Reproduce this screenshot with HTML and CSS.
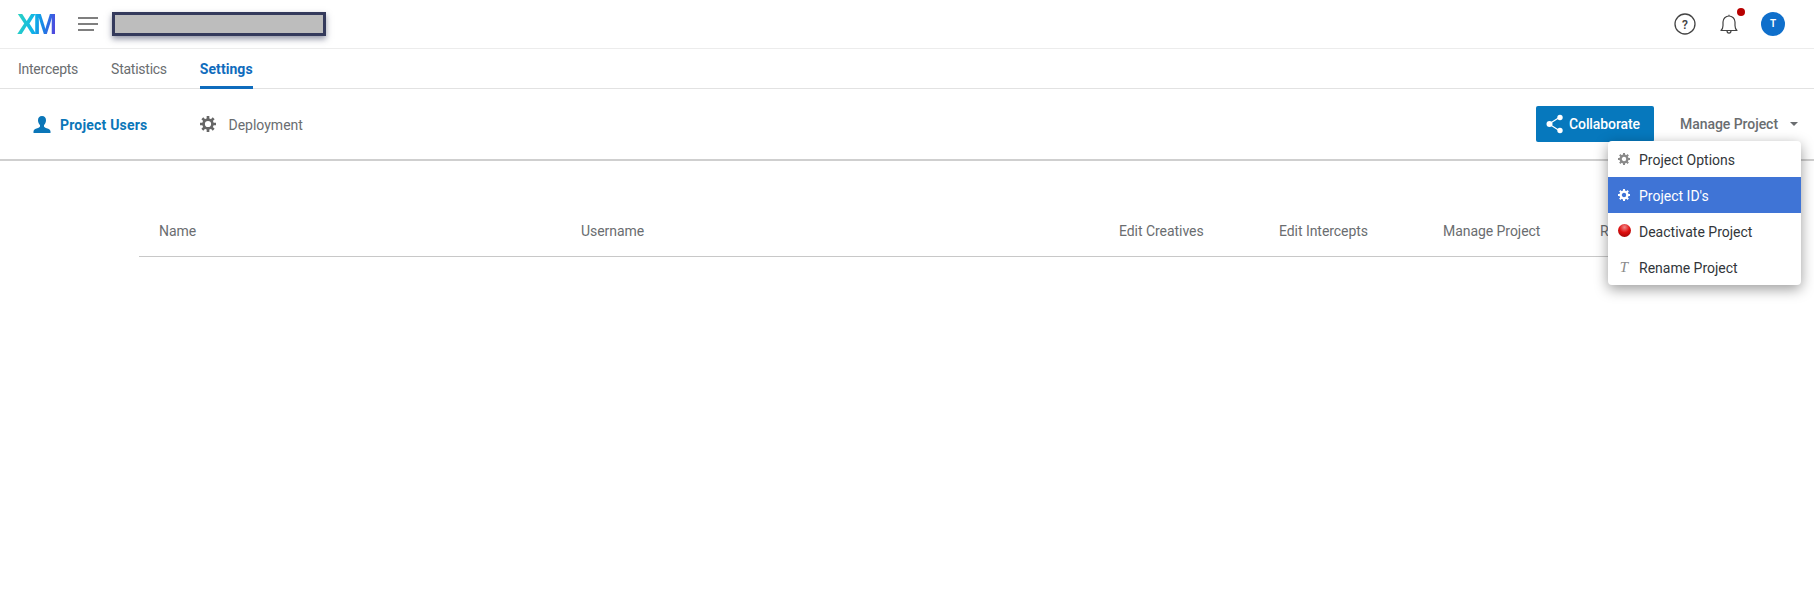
FILE: index.html
```html
<!DOCTYPE html>
<html lang="en">
<head>
<meta charset="utf-8">
<title>Project Settings</title>
<link rel="stylesheet" href="styles.css">
</head>
<body>
<header class="topbar">
  <div class="logo">XM</div>
  <svg class="burger" width="20" height="14" viewBox="0 0 20 14"><path d="M0 1h20M0 7h20M0 13h16" stroke="#555" stroke-width="1.6" fill="none"/></svg>
  <div class="redacted"></div>
  <div class="topbar-right">
    <svg class="help" width="22" height="22" viewBox="0 0 22 22"><circle cx="11" cy="11" r="10" fill="none" stroke="#444" stroke-width="1.3"/><text x="11" y="15.500" text-anchor="middle" class="help-mark">?</text></svg>
    <div class="bell-wrap">
      <svg width="18" height="20" viewBox="0 0 18 20"><path d="M1 16.500c1.500-1.200 2-2.500 2-5V8a6 6 0 0 1 12 0v3.500c0 2.500.5 3.800 2 5zM7 16.500c0 3.500 4 3.500 4 0M9 2V.8" fill="none" stroke="#444" stroke-width="1.200" stroke-linejoin="round"/></svg>
      <span class="dot"></span>
    </div>
    <div class="avatar">T</div>
  </div>
</header>
<nav class="tabs">
  <a class="tab">Intercepts</a>
  <a class="tab">Statistics</a>
  <a class="tab active">Settings</a>
</nav>
<section class="subnav">
  <a class="sub active">
    <svg width="18" height="17" viewBox="0 0 18 17"><path d="M9 0c2.600 0 4 1.900 4 4.300 0 2-.9 3.800-2 4.800v1.400c0 .9 2.200 1.400 4.200 2.200 1.500.6 2.300 1.500 2.300 2.800V17H.5v-1.500c0-1.300.8-2.200 2.300-2.800 2-.8 4.200-1.300 4.200-2.200V9.100C5.900 8.100 5 6.300 5 4.300 5 1.900 6.400 0 9 0z" fill="#0b76b8"/></svg>
    <span class="sub-label">Project Users</span>
  </a>
  <a class="sub">
    <svg class="cog" width="16" height="16" viewBox="0 0 18 18"><circle cx="9" cy="9" r="5" fill="none" stroke="#666" stroke-width="3"/><path d="M9 0v4M9 14v4M0 9h4M14 9h4M2.600 2.600l2.900 2.900M12.500 12.500l2.900 2.900M15.400 2.600l-2.900 2.900M5.500 12.500l-2.900 2.900" stroke="#666" stroke-width="3"/></svg>
    <span class="sub-label">Deployment</span>
  </a>
  <div class="sub-actions">
    <button class="collab">
      <svg width="18" height="20" viewBox="0 0 18 20"><path d="M3 10l11-7M3 10l11 7" stroke="#fff" stroke-width="1.200"/><circle cx="3.500" cy="10" r="3" fill="#fff"/><circle cx="14" cy="3.500" r="2.700" fill="#fff"/><circle cx="14" cy="16.500" r="2.700" fill="#fff"/></svg>
      Collaborate
    </button>
    <div class="manage">Manage Project<span class="caret"></span></div>
  </div>
</section>
<main class="content">
  <div class="thead">
    <span>Name</span>
    <span>Username</span>
    <span>Edit Creatives</span>
    <span>Edit Intercepts</span>
    <span>Manage Project</span>
    <span>R</span>
  </div>
</main>
<ul class="menu">
  <li>
    <svg width="12" height="12" viewBox="0 0 12 12"><circle cx="6" cy="6" r="3.400" fill="none" stroke="#8a8a8a" stroke-width="2.400"/><path d="M6 0v2.500M6 9.500V12M0 6h2.500M9.500 6H12M1.800 1.800l1.800 1.800M8.400 8.400l1.800 1.800M10.200 1.800L8.400 3.600M3.600 8.400l-1.800 1.800" stroke="#8a8a8a" stroke-width="2"/></svg>
    <span class="menu-label">Project Options</span>
  </li>
  <li class="selected">
    <svg width="12" height="12" viewBox="0 0 12 12"><circle cx="6" cy="6" r="3.400" fill="none" stroke="#fff" stroke-width="2.400"/><path d="M6 0v2.500M6 9.500V12M0 6h2.500M9.500 6H12M1.800 1.800l1.800 1.800M8.400 8.400l1.800 1.800M10.200 1.800L8.400 3.600M3.600 8.400l-1.800 1.800" stroke="#fff" stroke-width="2"/></svg>
    <span class="menu-label">Project ID's</span>
  </li>
  <li>
    <span class="redball"></span>
    <span class="menu-label">Deactivate Project</span>
  </li>
  <li>
    <span class="t-icon">T</span>
    <span class="menu-label">Rename Project</span>
  </li>
</ul>
</body>
</html>
```

FILE: styles.css
```css
* { box-sizing: border-box; }
html, body { margin: 0; padding: 0; }
body {
  position: relative;
  height: 615px;
  overflow: hidden;
  background: #fff;
  font-family: Roboto, "Noto Sans", sans-serif;
  font-size: 14px;
  color: #6a6d70;
}
.topbar {
  display: flex;
  align-items: center;
  height: 49px;
  padding: 0 29px 0 17px;
  border-bottom: 1px solid #ececec;
}
.logo {
  width: 38px;
  margin-right: 23px;
  font-family: "Liberation Sans", sans-serif;
  font-weight: 700;
  font-size: 29px;
  line-height: 28px;
  letter-spacing: -3px;
  background: linear-gradient(100deg, #2fd6bd 0%, #0fb4e8 45%, #1a7fe6 70%, #5a3fdc 100%);
  -webkit-background-clip: text;
  background-clip: text;
  color: transparent;
}
.burger { margin-right: 14px; }
.redacted {
  width: 214px;
  height: 24px;
  background: #bdbdbd;
  border: 3px solid #343a5c;
  box-shadow: 0 3px 6px rgba(40, 45, 80, .5);
}
.topbar-right {
  margin-left: auto;
  display: flex;
  align-items: center;
  gap: 23px;
}
.help { margin-right: 1px; }
.help-mark { font-size: 12px; font-weight: 600; fill: #444; }
.bell-wrap { position: relative; display: flex; width: 18px; height: 20px; }
.dot {
  position: absolute;
  right: -7px;
  top: -6px;
  width: 8px;
  height: 8px;
  border-radius: 50%;
  background: #b80000;
}
.avatar {
  width: 24px;
  height: 24px;
  border-radius: 50%;
  background: #0f6fcb;
  color: #fff;
  font-size: 10px;
  font-weight: 600;
  line-height: 24px;
  text-align: center;
}
.tabs {
  display: flex;
  gap: 33px;
  height: 40px;
  padding-left: 18px;
  border-bottom: 1px solid #e2e2e2;
}
.tab {
  display: block;
  height: 40px;
  line-height: 40px;
  letter-spacing: -.25px;
}
.tab.active {
  color: #0f6cbd;
  font-weight: 700;
  letter-spacing: .05px;
  border-bottom: 3px solid #0f6cbd;
}
.subnav {
  display: flex;
  align-items: center;
  height: 72px;
  padding: 0 16px 0 33px;
  border-bottom: 2px solid #cfcfcf;
}
.sub {
  display: flex;
  align-items: center;
  gap: 9px;
  margin-right: 53px;
  line-height: 20px;
}
.sub-label { position: relative; top: 1px; }
.sub.active { color: #0b76b8; font-weight: 700; letter-spacing: .2px; }
.sub .cog { margin-right: 3px; }
.sub-actions {
  margin-left: auto;
  display: flex;
  align-items: center;
  gap: 26px;
}
.collab {
  display: flex;
  align-items: center;
  gap: 5px;
  width: 118px;
  height: 36px;
  padding: 0 0 0 10px;
  border: 0;
  border-radius: 2px;
  background: #0678bd;
  color: #fff;
  font: 500 14px Roboto, sans-serif;
  letter-spacing: -.1px;
}
.manage { display: flex; align-items: center; font-weight: 500; letter-spacing: -.05px; }
.caret {
  width: 0;
  height: 0;
  margin-left: 12px;
  border: 4px solid transparent;
  border-top-color: #6a6d70;
  border-bottom-width: 0;
}
.content { padding: 0 139px; }
.thead {
  display: grid;
  grid-template-columns: 422px 538px 160px 164px 157px 1fr;
  align-items: center;
  height: 96px;
  padding: 44px 0 0 20px;
  border-bottom: 1px solid #c8c8c8;
  white-space: nowrap;
  letter-spacing: -.05px;
}
.menu {
  position: absolute;
  left: 1608px;
  top: 141px;
  width: 193px;
  margin: 0;
  padding: 0;
  list-style: none;
  background: #fff;
  border-radius: 4px;
  box-shadow: 0 4px 14px rgba(0, 0, 0, .4);
  color: #32363a;
}
.menu li {
  display: flex;
  align-items: center;
  height: 36px;
  padding-left: 10px;
  gap: 9px;
}
.menu-label { position: relative; top: 1px; }
.menu li:first-child { border-radius: 4px 4px 0 0; }
.menu li.selected { background: #3f74d6; color: #fff; }
.redball {
  width: 13px;
  height: 13px;
  margin: -2px -1px 0 0;
  border-radius: 50%;
  background: radial-gradient(circle at 50% 25%, #f08a8a 0%, #e01010 45%, #8e0000 100%);
}
.t-icon {
  width: 12px;
  font-family: "Liberation Serif", serif;
  font-style: italic;
  font-size: 15px;
  color: #8a8a8a;
  text-align: center;
}
```
